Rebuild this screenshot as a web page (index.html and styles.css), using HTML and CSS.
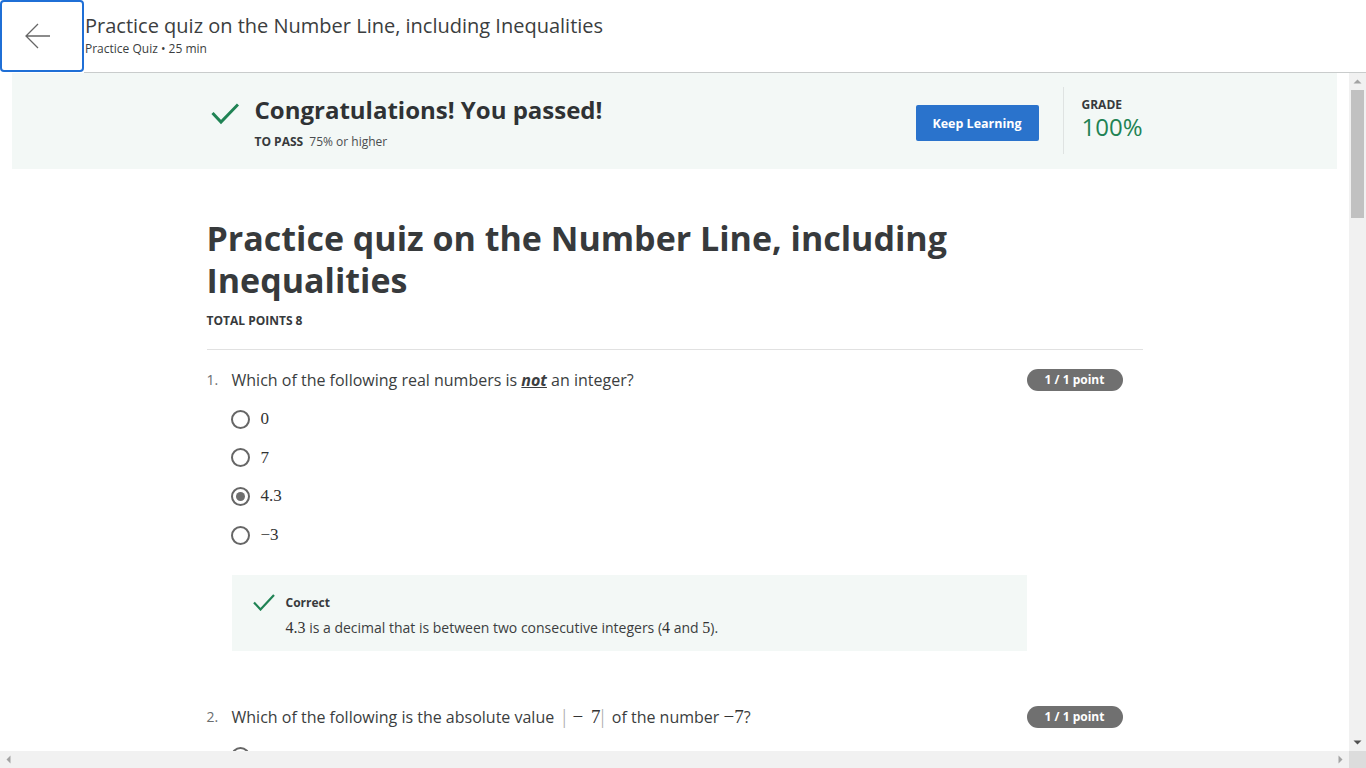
FILE: index.html
```html
<!DOCTYPE html>
<html lang="en">
<head>
<meta charset="utf-8">
<title>Practice quiz on the Number Line, including Inequalities</title>
<link rel="stylesheet" href="styles.css">
</head>
<body>
<div class="app">
  <header class="topbar">
    <button class="back" aria-label="Back">
      <svg width="26" height="26" viewBox="0 0 26 26"><path d="M13 1 L1 13 L13 25 M1 13 H25" fill="none" stroke="#666" stroke-width="1.3"/></svg>
    </button>
    <div class="head">
      <div class="head-title">Practice quiz on the Number Line, including Inequalities</div>
      <div class="head-sub">Practice Quiz • 25 min</div>
    </div>
  </header>
  <div class="frame">
    <div class="frame-row">
      <main class="main">
        <section class="banner">
          <div class="banner-inner">
            <svg class="pass-check" width="28" height="22" viewBox="0 0 28 22"><path d="M1.5 10 L10 19 L27 1.5" fill="none" stroke="#1f8354" stroke-width="3"/></svg>
            <div class="pass-text">
              <h2 class="pass-title">Congratulations! You passed!</h2>
              <div class="to-pass"><b>TO PASS</b> 75% or higher</div>
            </div>
            <button class="keep">Keep Learning</button>
            <div class="vdiv"></div>
            <div class="grade">
              <div class="grade-label">GRADE</div>
              <div class="grade-val">100%</div>
            </div>
          </div>
        </section>
        <div class="content">
          <h1 class="quiz-title">Practice quiz on the Number Line, including Inequalities</h1>
          <div class="total">TOTAL POINTS 8</div>
          <div class="rule"></div>

          <div class="question">
            <div class="q-row">
              <span class="q-num">1.</span>
              <span class="q-text">Which of the following real numbers is <b class="emph">not</b> an integer?</span>
              <span class="badge">1 / 1 point</span>
            </div>
            <div class="options">
              <div class="opt"><span class="radio"></span><span class="math">0</span></div>
              <div class="opt"><span class="radio"></span><span class="math">7</span></div>
              <div class="opt"><span class="radio checked"></span><span class="math">4.3</span></div>
              <div class="opt"><span class="radio"></span><span class="math">−3</span></div>
            </div>
            <div class="feedback">
              <svg class="fb-check" width="22" height="17" viewBox="0 0 22 17"><path d="M1 8.5 L7.5 15.5 L21 1" fill="none" stroke="#1f8354" stroke-width="2.2"/></svg>
              <div class="fb-body">
                <div class="fb-title">Correct</div>
                <div class="fb-text"><span class="math sm">4.3</span> is a decimal that is between two consecutive integers (<span class="math sm">4</span> and <span class="math sm">5</span>).</div>
              </div>
            </div>
          </div>

          <div class="question q2">
            <div class="q-row">
              <span class="q-num">2.</span>
              <span class="q-text">Which of the following is the absolute value <span class="math abs"><span class="bar">|</span><span class="bin">−</span>7<span class="bar">|</span></span> of the number <span class="math">−7</span>?</span>
              <span class="badge">1 / 1 point</span>
            </div>
            <div class="options">
              <div class="opt"><span class="radio"></span><span class="math">−7</span></div>
              <div class="opt"><span class="radio checked"></span><span class="math">7</span></div>
              <div class="opt"><span class="radio"></span><span class="math">0</span></div>
            </div>
          </div>
        </div>
      </main>
      <div class="vscroll">
        <div class="sb-btn"><svg width="17" height="17" viewBox="0 0 17 17"><path d="M4.5 10.5 H12.5 L8.5 6.5 Z" fill="#a3a3a3"/></svg></div>
        <div class="thumb"></div>
        <div class="sb-fill"></div>
        <div class="sb-btn"><svg width="17" height="17" viewBox="0 0 17 17"><path d="M4.5 6.5 H12.5 L8.5 10.5 Z" fill="#505050"/></svg></div>
      </div>
    </div>
    <div class="hscroll">
      <div class="sb-btn"><svg width="17" height="17" viewBox="0 0 17 17"><path d="M10.5 4.5 V12.5 L6.5 8.5 Z" fill="#a3a3a3"/></svg></div>
      <div class="sb-fill"></div>
      <div class="sb-btn"><svg width="17" height="17" viewBox="0 0 17 17"><path d="M6.5 4.5 V12.5 L10.5 8.5 Z" fill="#a3a3a3"/></svg></div>
      <div class="corner"></div>
    </div>
  </div>
</div>
</body>
</html>
```

FILE: styles.css
```css
* { box-sizing: border-box; }
html, body { margin: 0; padding: 0; }
body {
  font-family: "Open Sans", "Liberation Sans", sans-serif;
  color: #373a3c;
  background: #fff;
  overflow: hidden;
}
.app {
  width: 1366px;
  height: 768px;
  display: flex;
  flex-direction: column;
}

/* top bar */
.topbar { height: 73px; flex: none; display: flex; }
.back {
  width: 84px;
  height: 72px;
  flex: none;
  border: 2px solid #1f6fd6;
  border-radius: 4px;
  background: #fff;
  padding: 0 0 0 23px;
  display: flex;
  align-items: center;
}
.back svg { display: block; }
.head {
  flex: 1;
  border-bottom: 1px solid #c9cccc;
  padding: 14px 0 0 1px;
}
.head-title { font-size: 20px; line-height: 24px; color: #3b3e40; }
.head-sub { font-size: 12px; line-height: 16px; margin-top: 3px; color: #3b3e40; }

/* frame + fake scrollbars */
.frame { flex: 1; min-height: 0; display: flex; flex-direction: column; }
.frame-row { flex: 1; min-height: 0; display: flex; }
.main { flex: 1; min-width: 0; overflow: hidden; }
.vscroll { width: 17px; flex: none; background: #f1f1f1; display: flex; flex-direction: column; }
.vscroll .thumb { height: 128px; margin: 0 2px; background: #c1c1c1; }
.sb-btn { width: 17px; height: 17px; flex: none; }
.sb-btn svg { display: block; }
.sb-fill { flex: 1; }
.hscroll { height: 17px; flex: none; background: #f1f1f1; display: flex; }
.corner { width: 17px; height: 17px; background: #dcdcdc; }

/* banner */
.banner { margin: 0 12px; height: 96px; background: #f3f8f6; }
.banner-inner { width: 936px; margin: 0 auto; height: 100%; display: flex; align-items: flex-start; }
.pass-check { flex: none; margin: 30px 16px 0 4px; display: block; }
.pass-text { flex: 1; padding-top: 22px; }
.pass-title { margin: 0; font-size: 24px; line-height: 30px; font-weight: 700; color: #2f3234; }
.to-pass { margin-top: 9px; font-size: 12px; line-height: 16px; color: #4a4d4f; }
.to-pass b { color: #373a3c; margin-right: 3px; }
.keep {
  flex: none;
  margin-top: 32px;
  width: 123px;
  height: 36px;
  border: 0;
  border-radius: 2px;
  background: #2a73cc;
  color: #fff;
  font-family: inherit;
  font-size: 12.5px;
  font-weight: 700;
}
.vdiv { flex: none; width: 1px; height: 67px; margin: 14px 18px 0 24px; background: #dfe3e2; }
.grade { flex: none; width: 61px; padding-top: 25px; }
.grade-label { font-size: 12px; line-height: 14px; font-weight: 700; color: #373a3c; }
.grade-val { font-size: 24px; line-height: 28px; margin-top: 1px; color: #1f8354; }

/* content */
.content { width: 936px; margin: 0 auto; }
.quiz-title { margin: 49px 0 0; font-size: 34px; line-height: 41.5px; font-weight: 700; color: #373a3c; }
.total { margin-top: 12px; font-size: 12px; line-height: 16px; font-weight: 700; }
.rule { margin-top: 20px; height: 1px; background: #e1e1e1; }

.question { margin-top: 18px; }
.q2 { margin-top: 54px; }
.q-row { display: flex; align-items: flex-start; }
.q-num { width: 25px; flex: none; font-size: 14px; line-height: 24px; color: #6a6d6f; }
.q-text { flex: 1; font-size: 16px; line-height: 24px; color: #3b3e40; }
.emph { font-style: italic; text-decoration: underline; font-weight: 700; }
.badge {
  flex: none;
  margin: 1px 20px 0 0;
  width: 96px;
  height: 22px;
  border-radius: 11px;
  background: #707070;
  color: #fff;
  font-size: 12px;
  font-weight: 700;
  line-height: 22px;
  text-align: center;
}

.options { margin-top: 8px; padding-left: 24px; }
.opt { height: 38.6px; display: flex; align-items: center; }
.radio {
  width: 19px;
  height: 19px;
  flex: none;
  border: 2px solid #666;
  border-radius: 50%;
  display: flex;
  align-items: center;
  justify-content: center;
}
.radio.checked::after {
  content: "";
  width: 9px;
  height: 9px;
  border-radius: 50%;
  background: #6e6e6e;
}
.math { font-family: "Liberation Serif", "DejaVu Serif", serif; font-size: 17px; color: #333; }
.opt .math { margin-left: 11px; }
.math.sm { font-size: 16px; }
.q-text .math { font-size: 19px; line-height: 20px; }
.abs { margin: 0 3px 0 4px; }
.abs .bar { color: #b0b0b0; font-size: 20px; }
.abs .bin { margin: 0 8px 0 6px; }

/* feedback */
.feedback {
  margin: 21px 0 0 25px;
  width: 795px;
  height: 76px;
  background: #f3f8f6;
  display: flex;
  align-items: flex-start;
  padding: 19px 0 0 21px;
}
.fb-check { flex: none; display: block; margin-right: 11px; }
.fb-body { padding-top: 1px; }
.fb-title { font-size: 12px; line-height: 16px; font-weight: 700; color: #373a3c; }
.fb-text { margin-top: 7px; font-size: 14px; line-height: 20px; color: #3b3e40; }
```
